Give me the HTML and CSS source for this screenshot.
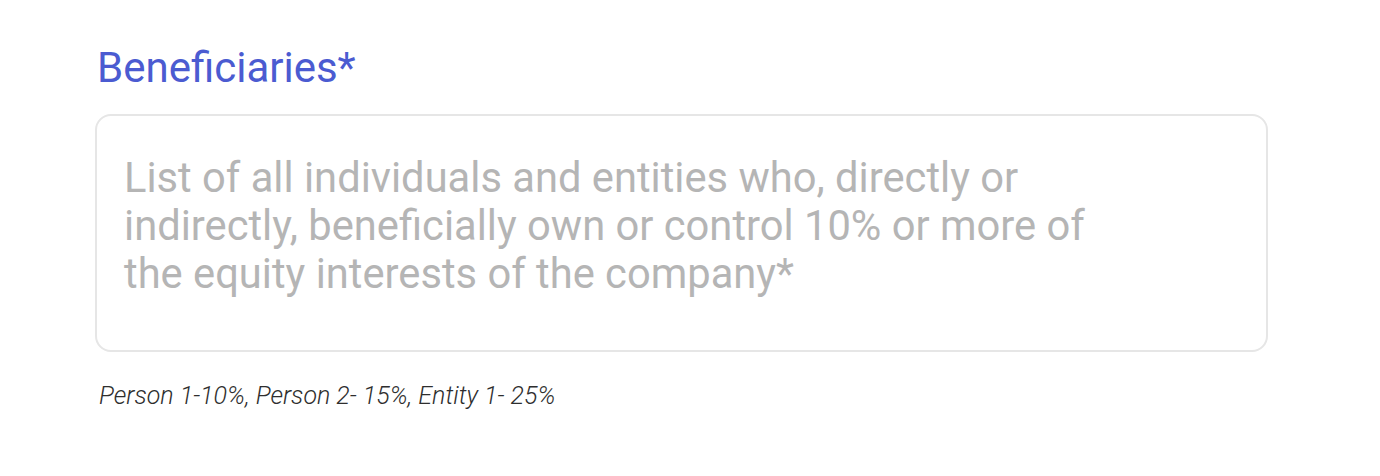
FILE: index.html
```html
<!DOCTYPE html>
<html lang="en">
<head>
<meta charset="utf-8">
<title>Beneficiaries</title>
<link rel="stylesheet" href="styles.css">
</head>
<body>
<div class="field">
  <label class="field-label" for="beneficiaries">Beneficiaries*</label>
  <div class="field-box" id="beneficiaries">
    <p class="placeholder">List of all individuals and entities who, directly or indirectly, beneficially own or control 10% or more of the equity interests of the company*</p>
  </div>
  <p class="field-hint">Person 1-10%, Person 2- 15%, Entity 1- 25%</p>
</div>
</body>
</html>
```
FILE: styles.css
```css
html, body {
  margin: 0;
  padding: 0;
  background: #ffffff;
}
body {
  font-family: Roboto, "Noto Sans", sans-serif;
}
.field {
  display: flex;
  flex-direction: column;
  padding: 46px 112px 0 95px;
}
.field-label {
  display: block;
  font-size: 42px;
  line-height: 44px;
  color: #4b5bd1;
  padding-left: 2px;
  margin-bottom: 24px;
}
.field-box {
  border: 2px solid #e6e6e6;
  border-radius: 16px;
  background: #ffffff;
  box-sizing: border-box;
  height: 238px;
  padding: 38px 27px;
}
.placeholder {
  margin: 0;
  max-width: 990px;
  font-size: 41.7px;
  line-height: 48px;
  color: #b5b5b5;
}
.field-hint {
  margin: 30px 0 0 4px;
  font-size: 25px;
  line-height: 28px;
  font-style: italic;
  font-weight: 300;
  color: #2e2e2e;
}
```
